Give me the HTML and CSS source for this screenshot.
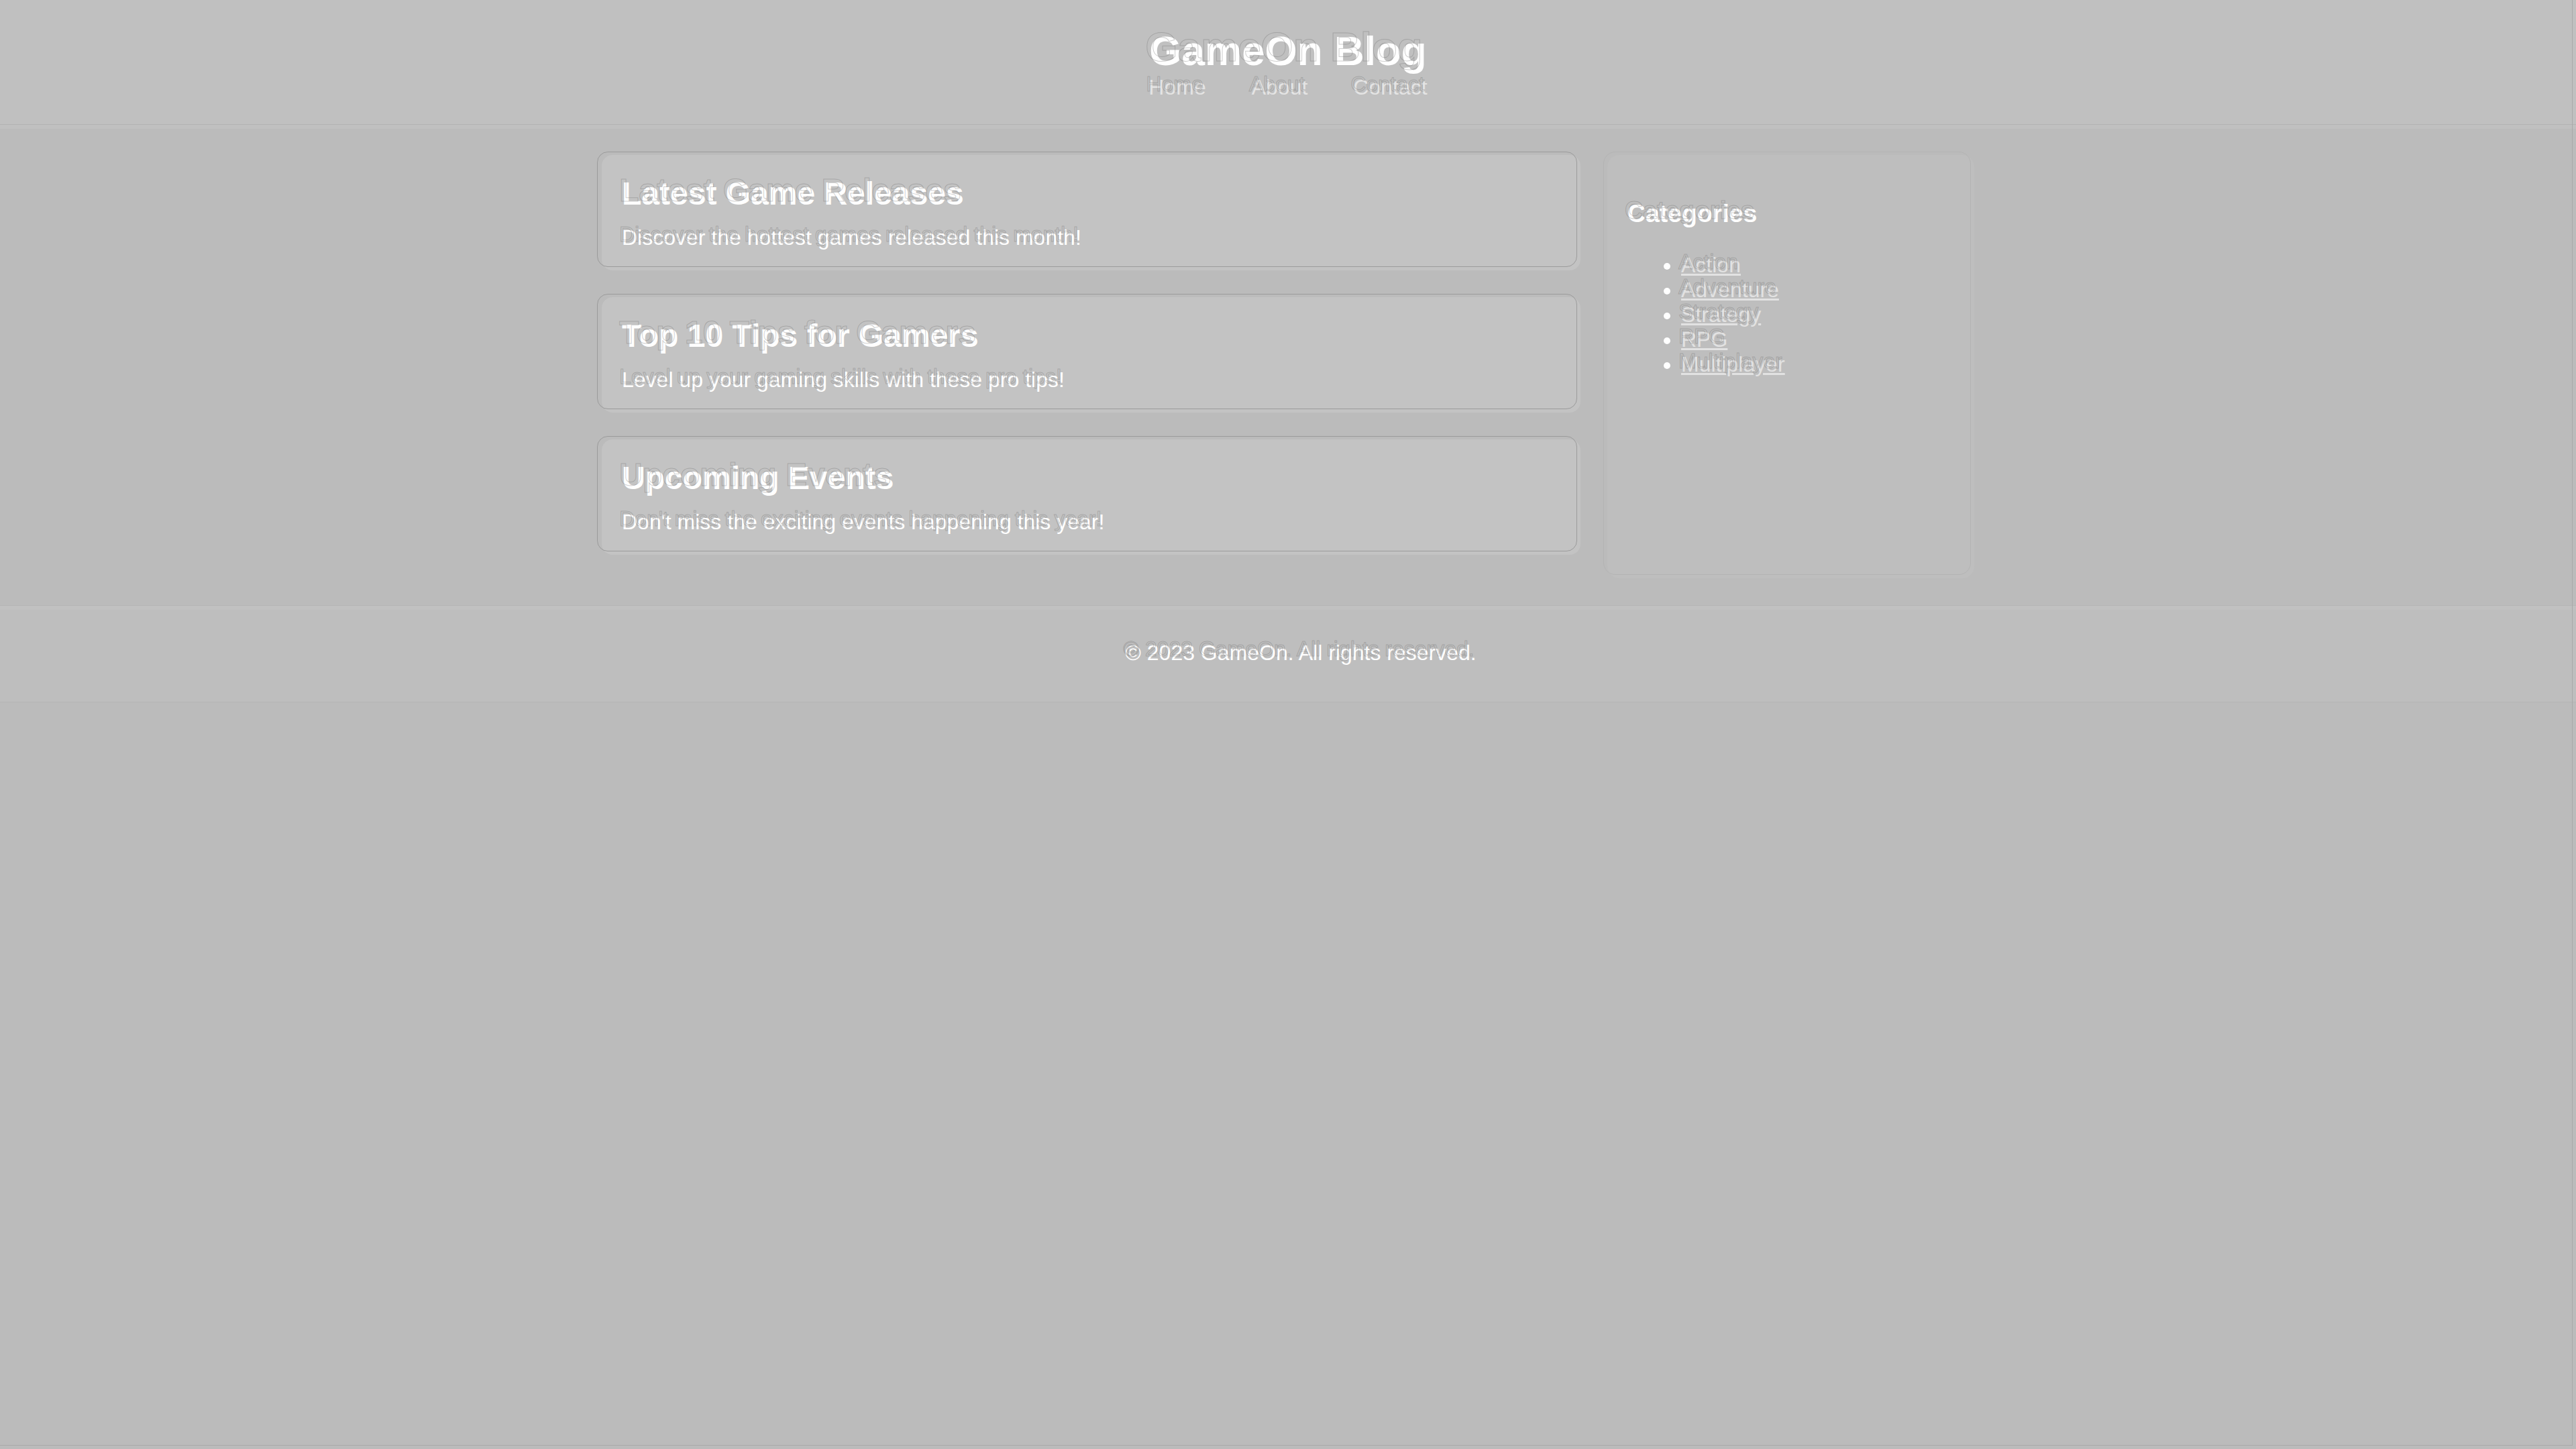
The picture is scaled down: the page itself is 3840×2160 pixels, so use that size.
FILE: index.html
```html
<!DOCTYPE html>
<html lang="en">
<head>
<meta charset="utf-8">
<title>GameOn Blog</title>
<link rel="stylesheet" href="styles.css">
</head>
<body>
<header class="site-header">
  <h1 class="site-title ghost ghost-lg" data-ghost="GameOn Blog">GameOn Blog</h1>
  <nav class="site-nav">
    <ul class="nav-list">
      <li><a href="#" class="ghost" data-ghost="Home">Home</a></li>
      <li><a href="#" class="ghost" data-ghost="About">About</a></li>
      <li><a href="#" class="ghost" data-ghost="Contact">Contact</a></li>
    </ul>
  </nav>
</header>
<main class="layout">
  <section class="posts">
    <article class="post">
      <h2 class="post-title ghost" data-ghost="Latest Game Releases">Latest Game Releases</h2>
      <p class="post-text ghost" data-ghost="Discover the hottest games released this month!">Discover the hottest games released this month!</p>
    </article>
    <article class="post">
      <h2 class="post-title ghost" data-ghost="Top 10 Tips for Gamers">Top 10 Tips for Gamers</h2>
      <p class="post-text ghost" data-ghost="Level up your gaming skills with these pro tips!">Level up your gaming skills with these pro tips!</p>
    </article>
    <article class="post">
      <h2 class="post-title ghost" data-ghost="Upcoming Events">Upcoming Events</h2>
      <p class="post-text ghost" data-ghost="Don't miss the exciting events happening this year!">Don't miss the exciting events happening this year!</p>
    </article>
  </section>
  <aside class="sidebar">
    <h3 class="sidebar-title ghost" data-ghost="Categories">Categories</h3>
    <ul class="cat-list">
      <li><a href="#" class="ghost" data-ghost="Action">Action</a></li>
      <li><a href="#" class="ghost" data-ghost="Adventure">Adventure</a></li>
      <li><a href="#" class="ghost" data-ghost="Strategy">Strategy</a></li>
      <li><a href="#" class="ghost" data-ghost="RPG">RPG</a></li>
      <li><a href="#" class="ghost" data-ghost="Multiplayer">Multiplayer</a></li>
    </ul>
  </aside>
</main>
<footer class="site-footer">
  <p class="footer-text"><span class="ghost ghost-footer" data-ghost="© 2023 GameOn. All rights reserved.">© 2023 GameOn. All rights reserved.</span></p>
</footer>
</body>
</html>
```
FILE: styles.css
```css
html {
  background: #bbbbbb;
}
body {
  margin: 0;
  min-height: 2160px;
  background: #bbbbbb;
  color: #ffffff;
  font-family: "Liberation Sans", Arial, sans-serif;
  font-size: 32px;
}
body::after {
  content: "";
  position: fixed;
  top: 0;
  left: 0;
  width: 3834px;
  height: 2154px;
  border-right: 1px solid #a9a9a9;
  border-bottom: 1px solid #a9a9a9;
  pointer-events: none;
}

/* Faint offset outline of the text (double-exposure look) */
.ghost {
  position: relative;
}
.ghost::before {
  content: attr(data-ghost);
  position: absolute;
  left: -4px;
  top: -5px;
  white-space: nowrap;
  color: transparent;
  -webkit-text-stroke: 1px rgba(105, 105, 105, 0.32);
  pointer-events: none;
}
.ghost-lg::before {
  left: -6px;
  top: -6px;
}
.ghost-footer::before {
  left: -3px;
  top: -6px;
}

/* Header */
.site-header {
  background: #c0c0c0;
  padding: 42px 0 36px;
  border-bottom: 1px solid #b3b3b3;
  box-shadow: 0 6px 0 #c0c0c0;
  display: flex;
  flex-direction: column;
  align-items: center;
}
.site-title {
  margin: 0 0 2px;
  font-size: 62px;
  line-height: 68px;
  font-weight: bold;
  color: #ffffff;
}
.nav-list {
  list-style: none;
  margin: 0;
  padding: 0;
  display: flex;
  gap: 68px;
  line-height: 37px;
}
.nav-list a {
  color: #e4e4e4;
  text-decoration: none;
}

/* Main layout */
.layout {
  width: 2046px;
  margin: 0 auto;
  padding: 45px 0 40px;
  display: grid;
  grid-template-columns: 1fr 547px;
  column-gap: 40px;
  align-items: start;
}
.posts {
  display: flex;
  flex-direction: column;
  gap: 40px;
}
.post {
  position: relative;
  background: #c3c3c3;
  border-radius: 16px;
  padding: 30px;
}
.post::after {
  content: "";
  position: absolute;
  top: -5px;
  left: -7px;
  right: 5px;
  bottom: 5px;
  border: 1px solid #9b9b9b;
  border-radius: 16px;
  pointer-events: none;
}
.post-title {
  margin: 0 0 20px;
  font-size: 48px;
  font-weight: bold;
}
.post-text {
  margin: 0;
  font-size: 32px;
}

/* Sidebar */
.sidebar {
  position: relative;
  box-sizing: border-box;
  height: 631px;
  background: #bebebe;
  border-radius: 18px;
  padding: 30px;
}
.sidebar::after {
  content: "";
  position: absolute;
  top: -5px;
  left: -6px;
  right: 5px;
  bottom: 5px;
  border: 1px solid #b4b4b4;
  border-radius: 18px;
  pointer-events: none;
}
.sidebar-title {
  margin: 36px 0 37px;
  font-size: 37.44px;
  font-weight: bold;
}
.cat-list {
  margin: 0;
  padding-left: 80px;
}
.cat-list li::marker {
  color: #ffffff;
}
.cat-list a {
  color: #e2e2e2;
  text-decoration: underline;
}

/* Footer */
.site-footer {
  background: #bebebe;
  border-top: 1px solid #b4b4b4;
  border-bottom: 1px solid #b4b4b4;
  box-shadow: inset 0 6px 0 #c1c1c1;
  padding: 52px 0 54px 38px;
  text-align: center;
}
.footer-text {
  margin: 0;
}
```
